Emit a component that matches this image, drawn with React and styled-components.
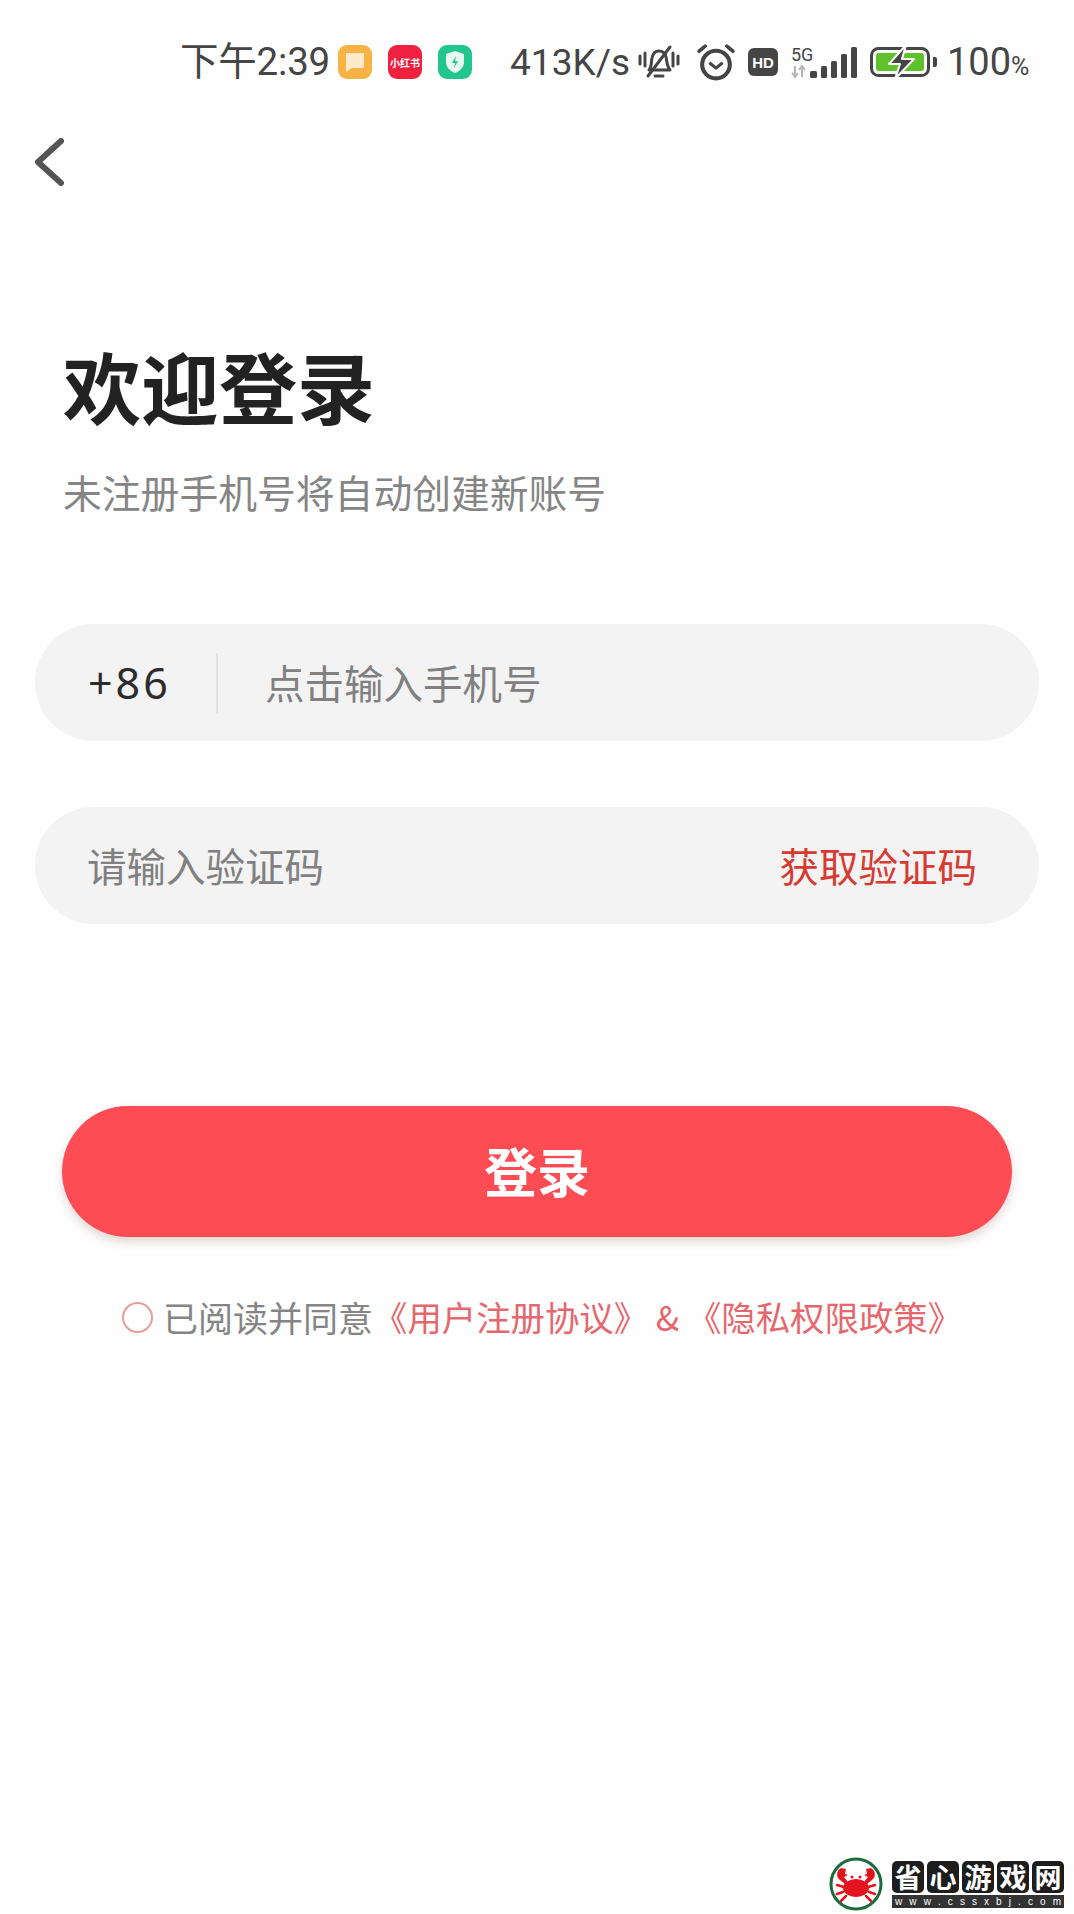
import React from 'react';
import styled, { createGlobalStyle } from 'styled-components';

const cjk = `"Noto Sans CJK SC", "Noto Sans", sans-serif`;

const GlobalStyle = createGlobalStyle`
  html, body {
    margin: 0;
    padding: 0;
    background: #fefefe;
  }
  * {
    box-sizing: border-box;
  }
`;

const Page = styled.div`
  position: relative;
  width: 1074px;
  height: 1914px;
  overflow: hidden;
  background: #fefefe;
  font-family: ${cjk};
`;

const StatusBar = styled.div`
  display: flex;
  align-items: center;
  height: 122px;
  padding: 2px 0 0 180px;
  color: #454545;
`;

const StatusText = styled.span`
  font-family: Roboto, ${cjk};
  font-size: ${(p) => p.size || 37}px;
  line-height: 1;
  margin-left: ${(p) => p.left || 0}px;
  letter-spacing: ${(p) => p.spacing || 0}px;
  white-space: nowrap;
`;

const AppIcons = styled.div`
  display: flex;
  gap: 16px;
  margin-left: 8px;
`;

const AppIcon = styled.div`
  display: flex;
  align-items: center;
  justify-content: center;
  width: 34px;
  height: 34px;
  border-radius: 9px;
  background: ${(p) => p.bg};
  color: #fff;
  font-size: 10px;
  font-weight: 700;
  white-space: nowrap;
  overflow: hidden;
`;

const StatusIcon = styled.svg`
  display: block;
  flex: none;
  margin-left: ${(p) => p.left || 0}px;
`;

const Percent = styled.span`
  font-size: 25px;
`;

const BackRow = styled.div`
  height: 64px;
  padding: 16px 0 0 34px;
`;

const Heading = styled.h1`
  margin: 154px 0 0 63px;
  font-size: 78px;
  line-height: 90px;
  font-weight: 700;
  color: #222;
`;

const SubHeading = styled.p`
  margin: 36px 0 0 63px;
  font-size: 38.8px;
  line-height: 50px;
  font-weight: 400;
  color: #858585;
`;

const Form = styled.div`
  display: flex;
  flex-direction: column;
  gap: 66px;
  margin: 108px 35px 0;
`;

const Field = styled.div`
  display: flex;
  align-items: center;
  height: 117px;
  padding: 0 62px 0 52px;
  border-radius: 58.5px;
  background: #f3f3f3;
`;

const Prefix = styled.span`
  width: 131px;
  height: 60px;
  padding-left: 1px;
  border-right: 2px solid #e2e2e2;
  font-family: "Noto Sans", ${cjk};
  font-size: 43px;
  line-height: 60px;
  letter-spacing: 3px;
  color: #2c2c2c;
`;

const TextInput = styled.input`
  flex: 1;
  min-width: 0;
  height: 60px;
  margin-left: ${(p) => p.left || 0}px;
  padding: 0 0 3px;
  border: none;
  outline: none;
  background: transparent;
  font-family: ${cjk};
  font-size: 39.5px;
  color: #333;

  &::placeholder {
    color: #808080;
    opacity: 1;
  }
`;

const CodeButton = styled.button`
  padding: 0 0 2px;
  border: none;
  background: none;
  font-family: ${cjk};
  font-size: 39.5px;
  color: #d73a30;
`;

const LoginButton = styled.button`
  display: block;
  width: 950px;
  height: 131px;
  margin: 182px 0 0 62px;
  padding: 0 0 4px;
  border: none;
  border-radius: 65.5px;
  background: #fe4c55;
  box-shadow: 0 5px 10px rgba(120, 60, 60, 0.2);
  font-family: ${cjk};
  font-size: 53px;
  font-weight: 700;
  color: #fff;
`;

const Agreement = styled.div`
  display: flex;
  align-items: center;
  height: 50px;
  margin: 54px 0 0 122px;
  font-size: 35px;
  color: #858585;
  white-space: nowrap;
`;

const Radio = styled.span`
  flex: none;
  width: 31px;
  height: 31px;
  margin: 3px 10px 0 0;
  border: 2.5px solid #e99c9c;
  border-radius: 50%;
`;

const AgreementLink = styled.span`
  font-size: 34.4px;
  color: #e4686e;
`;

const Watermark = styled.div`
  position: absolute;
  right: 10px;
  bottom: 3px;
  display: flex;
  align-items: center;
  gap: 9px;
`;

const Tiles = styled.div`
  display: flex;
  flex-direction: column;
  gap: 2px;
  width: 172px;
`;

const TileRow = styled.div`
  display: flex;
  justify-content: space-between;
`;

const Tile = styled.span`
  display: flex;
  align-items: center;
  justify-content: center;
  width: 32px;
  height: 32px;
  border-radius: 5px;
  background: #1d1d1d;
  font-size: 27px;
  line-height: 1;
  font-weight: 700;
  color: #fff;
`;

const SiteStrip = styled.div`
  display: flex;
  justify-content: space-between;
  align-items: center;
  height: 13px;
  padding: 0 3px;
  background: #333;
  font-family: "Liberation Sans", sans-serif;
  font-size: 10px;
  color: #fff;
`;

const BellIcon = () => (
  <StatusIcon left={7} width="44" height="42" viewBox="0 0 44 40" fill="none" stroke="#454545" strokeWidth="3" strokeLinecap="round">
    <path d="M12 28c3-3 2-8 3-12 1-5 4-7 7-7s6 2 7 6c1 5 1 9 4 13H12z" strokeLinejoin="round" />
    <path d="M18 34h8" />
    <path d="M11 34L33 5" />
    <path d="M3 14v8M8 11v13M36 11v13M41 14v8" />
  </StatusIcon>
);

const AlarmIcon = () => (
  <StatusIcon left={15} width="40" height="40" viewBox="0 0 39 39" fill="none" stroke="#454545" strokeLinecap="round" strokeLinejoin="round">
    <circle cx="19.5" cy="22" r="13.5" strokeWidth="4" />
    <path d="M14 21l5.5 4.5L25 21" strokeWidth="3" />
    <path d="M3 9l6-5M36 9l-6-5" strokeWidth="3.5" />
  </StatusIcon>
);

const HdIcon = () => (
  <StatusIcon left={12} width="30" height="28" viewBox="0 0 30 28">
    <rect width="30" height="28" rx="6" fill="#454545" />
    <text x="15" y="19.5" textAnchor="middle" fontFamily="Liberation Sans, sans-serif" fontWeight="700" fontSize="15" fill="#fff">HD</text>
  </StatusIcon>
);

const SignalIcon = () => (
  <StatusIcon left={13} width="67" height="36" viewBox="0 0 67 36">
    <text x="0" y="17" fontFamily="Roboto, sans-serif" fontSize="18" fill="#454545">5G</text>
    <path d="M4 22v11M1 29l3 4 3-4M11 33V22M8 26l3-4 3 4" fill="none" stroke="#b5b5b5" strokeWidth="2" />
    <rect x="19" y="27" width="7" height="7" rx="1.5" fill="#454545" />
    <rect x="30" y="22" width="6" height="12" rx="1.5" fill="#454545" />
    <rect x="40" y="17" width="6" height="17" rx="1.5" fill="#454545" />
    <rect x="50" y="10" width="6" height="24" rx="1.5" fill="#454545" />
    <rect x="60" y="3" width="6" height="31" rx="1.5" fill="#454545" />
  </StatusIcon>
);

const BatteryIcon = () => (
  <StatusIcon left={12} width="67" height="34" viewBox="0 0 67 34">
    <rect x="1.5" y="3.5" width="57" height="27" rx="7" fill="none" stroke="#454545" strokeWidth="3" />
    <rect x="6" y="8" width="48" height="18" rx="3" fill="#5fc22c" />
    <path d="M63 12h2a2 2 0 0 1 2 2v6a2 2 0 0 1-2 2h-2z" fill="#454545" />
    <path d="M36 0L19 19h11l-5 15 19-20H32z" fill="#454545" stroke="#fefefe" strokeWidth="2" strokeLinejoin="round" />
  </StatusIcon>
);

const CrabLogo = () => (
  <svg width="54" height="54" viewBox="0 0 54 54">
    <circle cx="27" cy="27" r="25" fill="#fff" stroke="#1d6b3c" strokeWidth="3" />
    <ellipse cx="27" cy="31" rx="13" ry="9" fill="#e3141e" />
    <path d="M12 11c-5 3-5 9-1 12l5 4 3-2-4-5 4-2-3-1 1-5zM42 11c5 3 5 9 1 12l-5 4-3-2 4-5-4-2 3-1-1-5z" fill="#e3141e" />
    <path d="M15 30l-7-2M14 35l-6 2M17 39l-5 5M39 30l7-2M40 35l6 2M37 39l5 5" stroke="#e3141e" strokeWidth="2.5" strokeLinecap="round" />
    <circle cx="23" cy="20" r="1.5" fill="#e3141e" />
    <circle cx="31" cy="20" r="1.5" fill="#e3141e" />
  </svg>
);

const App = () => {
  return (
    <Page>
      <GlobalStyle />
      <StatusBar>
        <StatusText size={38.5} spacing={-0.2}>下午2:39</StatusText>
        <AppIcons>
          <AppIcon bg="#f8b345">
            <svg width="22" height="22" viewBox="0 0 22 22">
              <path d="M2 2h18v13a2 2 0 0 1-2 2H8l-6 4z" fill="#fdeacb" />
            </svg>
          </AppIcon>
          <AppIcon bg="#f0203f">小红书</AppIcon>
          <AppIcon bg="#22c58e">
            <svg width="22" height="24" viewBox="0 0 22 24">
              <path d="M11 1l9 3v8c0 5-4 9-9 11-5-2-9-6-9-11V4z" fill="#e6f8f1" />
              <path d="M12 6l-4 7h3l-1 5 4-7h-3z" fill="#22c58e" />
            </svg>
          </AppIcon>
        </AppIcons>
        <StatusText left={38}>413K/s</StatusText>
        <BellIcon />
        <AlarmIcon />
        <HdIcon />
        <SignalIcon />
        <BatteryIcon />
        <StatusText left={10} size={38}>100<Percent>%</Percent></StatusText>
      </StatusBar>

      <BackRow>
        <svg width="30" height="48" viewBox="0 0 30 48" fill="none" stroke="#555" strokeWidth="6" strokeLinecap="round" strokeLinejoin="round">
          <path d="M27 3L4 24l23 21" />
        </svg>
      </BackRow>

      <Heading>欢迎登录</Heading>
      <SubHeading>未注册手机号将自动创建新账号</SubHeading>

      <Form>
        <Field>
          <Prefix>+86</Prefix>
          <TextInput left={47} placeholder="点击输入手机号" />
        </Field>
        <Field>
          <TextInput placeholder="请输入验证码" />
          <CodeButton>获取验证码</CodeButton>
        </Field>
      </Form>

      <LoginButton>登录</LoginButton>

      <Agreement>
        <Radio />
        已阅读并同意
        <AgreementLink>《用户注册协议》 &amp; 《隐私权限政策》</AgreementLink>
      </Agreement>

      <Watermark>
        <CrabLogo />
        <Tiles>
          <TileRow>
            <Tile>省</Tile>
            <Tile>心</Tile>
            <Tile>游</Tile>
            <Tile>戏</Tile>
            <Tile>网</Tile>
          </TileRow>
          <SiteStrip>
            {'www.cssxbj.com'.split('').map((c, i) => (
              <span key={i}>{c}</span>
            ))}
          </SiteStrip>
        </Tiles>
      </Watermark>
    </Page>
  );
};

export default App;
